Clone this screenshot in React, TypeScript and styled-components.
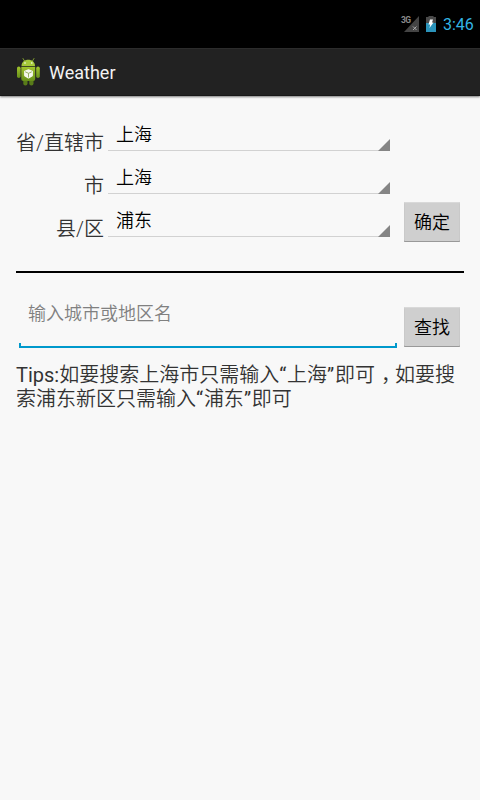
import React from 'react';
import styled, { createGlobalStyle } from 'styled-components';

const GlobalStyle = createGlobalStyle`
  * { box-sizing: border-box; }
  body {
    margin: 0;
    background: #f8f8f8;
    font-family: Roboto, 'Noto Sans CJK SC', sans-serif;
  }
`;

const Screen = styled.div`
  width: 480px;
  height: 800px;
  overflow: hidden;
  background: #f8f8f8;
  color: #333;
`;

const StatusBar = styled.header`
  height: 48px;
  background: #000;
  display: flex;
  justify-content: flex-end;
  align-items: center;
  padding-right: 6px;
`;

const SignalIcon = styled.svg`
  width: 20px;
  height: 18px;
  margin: 0 5px 2px 0;
`;

const BatteryIcon = styled.svg`
  width: 12px;
  height: 16px;
  margin-right: 6px;
`;

const Clock = styled.time`
  width: 31px;
  padding-top: 2px;
  font-size: 16px;
  line-height: 46px;
  color: #33b5e5;
  white-space: nowrap;
`;

const ActionBar = styled.div`
  height: 48px;
  background: #222;
  border-top: 1px solid #2c2c2c;
  border-bottom: 1px solid #181818;
  box-shadow: 0 1px 2px rgba(0, 0, 0, 0.5);
  display: flex;
  align-items: center;
  padding-left: 16px;
`;

const AppIcon = styled.svg`
  width: 25px;
  height: 30px;
  margin-right: 8px;
`;

const Title = styled.h1`
  margin: 0;
  padding-top: 2px;
  font-size: 18px;
  font-weight: 400;
  line-height: 44px;
  color: #f3f3f3;
`;

const Content = styled.main`
  padding: 12px 16px 0;
`;

const RegionForm = styled.section`
  display: flex;
  align-items: flex-end;
  height: 134px;
`;

const Rows = styled.div`
  width: 374px;
  height: 134px;
  padding-top: 4px;
`;

const Row = styled.div`
  display: grid;
  grid-template-columns: 88px 282px;
  column-gap: 4px;
  height: 43px;
`;

const Label = styled.label`
  padding-top: 19px;
  font-size: 20px;
  line-height: 24px;
  font-weight: 350;
  text-align: right;
  white-space: nowrap;
`;

const Spinner = styled.div`
  display: flex;
  justify-content: space-between;
  align-items: flex-end;
  height: 39px;
  border-bottom: 1px solid #d2d2d2;
  padding-left: 8px;
`;

const SpinnerText = styled.span`
  font-size: 18px;
  line-height: 22px;
  font-weight: 350;
  padding-bottom: 4px;
  color: #000;
`;

const Corner = styled.svg`
  width: 12px;
  height: 12px;
  margin-bottom: -1px;
`;

const Button = styled.button`
  width: 56px;
  height: 40px;
  margin-left: auto;
  margin-right: 4px;
  padding: 2px 0 0;
  border: 0;
  border-radius: 1px;
  background: #cfcfcf;
  box-shadow: inset 0 1px #d9d9d9, inset 0 -1px #999, inset 1px 0 #c9c9c9, inset -1px 0 #c9c9c9;
  font: 350 18px/38px Roboto, 'Noto Sans CJK SC', sans-serif;
  color: #000;
`;

const Divider = styled.hr`
  height: 2px;
  margin: 29px 0 0;
  border: 0;
  background: #000;
`;

const SearchForm = styled.section`
  display: flex;
  align-items: flex-end;
  height: 75px;
  padding-bottom: 1px;
`;

const Field = styled.div`
  width: 378px;
  height: 56px;
  margin: 0 0 -1px 3px;
  display: flex;
  flex-direction: column;
  justify-content: space-between;
`;

const Input = styled.input`
  width: 100%;
  height: 42px;
  padding: 0 9px;
  border: 0;
  outline: 0;
  background: transparent;
  font: 350 18px/24px Roboto, 'Noto Sans CJK SC', sans-serif;
  color: #000;
  &::placeholder { color: #808080; opacity: 1; }
`;

const Underline = styled.div`
  height: 5px;
  border: 2px solid #0099cc;
  border-top: 0;
`;

const Tips = styled.p`
  margin: 15px 0 0;
  font-size: 20px;
  line-height: 24px;
  font-weight: 350;
`;

const Latin = styled.span`
  font-weight: 400;
`;

const Quote = styled(Latin)`
  letter-spacing: 0.8px;
`;

/* Full-width comma, centred in its cell and sitting on the baseline. */
const Comma = styled.span`
  display: inline-block;
  width: 20px;
  height: 20px;
  line-height: 20px;
  text-indent: 6px;
  white-space: nowrap;
`;

const regions = [
  { label: '省/直辖市', value: '上海' },
  { label: '市', value: '上海' },
  { label: '县/区', value: '浦东' },
];

export default function App() {
  return (
    <Screen>
      <GlobalStyle />
      <StatusBar>
        <SignalIcon viewBox="0 0 20 18">
          <path d="M19 2V18H4Z" fill="#444" />
          <text x="1" y="9" fontFamily="Roboto" fontSize="8.5" fontWeight="700" fill="#8a8a8a" textLength="10">3G</text>
          <path d="M13 12.5L16.5 16M16.5 12.5L13 16" stroke="#aaa" strokeWidth="1" />
        </SignalIcon>
        <BatteryIcon viewBox="0 0 12 16">
          <path d="M3.5 0H8.5V1H11V16H1V1H3.5Z" fill="#4a4a4a" />
          <path d="M1 7H11V16H1Z" fill="#2b93ba" />
          <path d="M5 3.5H8L7 6.5H8.5L4.5 12L5.2 8.6H3.5Z" fill="#fff" />
        </BatteryIcon>
        <Clock>3:46</Clock>
      </StatusBar>
      <ActionBar>
        <AppIcon viewBox="0 0 25 30">
          <defs>
            <linearGradient id="android" x1="0" y1="0" x2="0" y2="1">
              <stop offset="0" stopColor="#a2c52d" />
              <stop offset="1" stopColor="#668f19" />
            </linearGradient>
          </defs>
          <path d="M8.5 4L7 1.5M16.5 4L18 1.5" stroke="#86a62f" strokeWidth="0.9" strokeLinecap="round" />
          <path d="M5.5 9C5.5 0.8 19 0.8 19 9Z" fill="#a6c93a" />
          <circle cx="9" cy="6" r="0.8" fill="#fff" />
          <circle cx="15.8" cy="6" r="0.8" fill="#fff" />
          <rect x="7.3" y="20" width="4.2" height="8.5" rx="2" fill="#587b19" />
          <rect x="13.3" y="20" width="4.2" height="8.5" rx="2" fill="#587b19" />
          <rect x="1" y="9.5" width="3.6" height="11.5" rx="1.8" fill="url(#android)" />
          <rect x="20.2" y="9.5" width="3.6" height="11.5" rx="1.8" fill="url(#android)" />
          <path d="M5.3 9.8H19.2V22Q19.2 24 17.2 24H7.3Q5.3 24 5.3 22Z" fill="url(#android)" />
          <path d="M12.5 13L16.2 14.4V18.6L12.5 20.8L8.8 18.6V14.4Z" fill="#f5f8ec" stroke="#f5f8ec" strokeWidth="1.4" strokeLinejoin="round" />
          <path d="M9.2 14.8L12.5 16.3L15.8 14.8M12.5 16.3V20.5" fill="none" stroke="#8ba755" strokeWidth="0.9" />
        </AppIcon>
        <Title>Weather</Title>
      </ActionBar>
      <Content>
        <RegionForm>
          <Rows>
            {regions.map((r) => (
              <Row key={r.label}>
                <Label>{r.label}</Label>
                <Spinner>
                  <SpinnerText>{r.value}</SpinnerText>
                  <Corner viewBox="0 0 12 12"><path d="M12 0V12H0Z" fill="#858585" /></Corner>
                </Spinner>
              </Row>
            ))}
          </Rows>
          <Button>确定</Button>
        </RegionForm>
        <Divider />
        <SearchForm>
          <Field>
            <Input placeholder="输入城市或地区名" />
            <Underline />
          </Field>
          <Button>查找</Button>
        </SearchForm>
        <Tips>
          <Latin>Tips:</Latin>如要搜索上海市只需输入<Quote>“</Quote>上海<Quote>”</Quote>即可<Comma>，</Comma>如要搜索浦东新区只需输入<Quote>“</Quote>浦东<Quote>”</Quote>即可
        </Tips>
      </Content>
    </Screen>
  );
}
